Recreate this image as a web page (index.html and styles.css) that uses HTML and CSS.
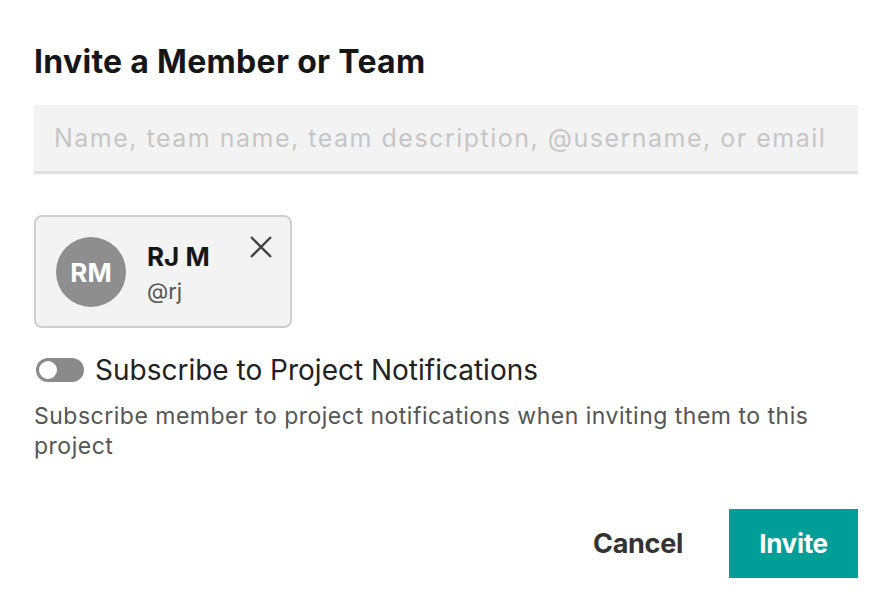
FILE: index.html
```html
<!DOCTYPE html>
<html>
<head>
<meta charset="utf-8">
<link rel="stylesheet" href="styles.css">
</head>
<body>
<div class="dialog">
  <h1 class="title">Invite a Member or Team</h1>
  <div class="search">
    <input class="search-input" type="text" placeholder="Name, team name, team description, @username, or email">
  </div>
  <div class="chips">
    <div class="chip">
      <div class="avatar">RM</div>
      <div class="chip-info">
        <div class="chip-name">RJ M</div>
        <div class="chip-handle">@rj</div>
      </div>
      <button class="chip-close" aria-label="Remove">
        <svg width="24" height="24" viewBox="0 0 24 24"><path d="M2 2 L22 22 M22 2 L2 22" stroke="#444" stroke-width="2.4" fill="none"/></svg>
      </button>
    </div>
  </div>
  <div class="toggle-row">
    <span class="toggle"><span class="knob"></span></span>
    <span class="toggle-label">Subscribe to Project Notifications</span>
  </div>
  <p class="desc">Subscribe member to project notifications when inviting them to this project</p>
  <div class="actions">
    <button class="btn-cancel">Cancel</button>
    <button class="btn-invite">Invite</button>
  </div>
</div>
</body>
</html>
```
FILE: styles.css
```css
html, body { margin: 0; padding: 0; background: #fff; }
body { font-family: Inter, "Liberation Sans", Arial, sans-serif; color: #1a1a1a; }
.dialog { padding: 40px 30px 0 34px; width: 824px; }
.title { margin: 0; font-size: 32px; font-weight: 700; line-height: 44px; letter-spacing: 0.3px; color: #161616; }
.search { margin-top: 21px; background: #f3f3f3; border-bottom: 3px solid #e0e0e0; height: 66px; display: flex; align-items: center; }
.search-input { border: 0; background: transparent; outline: none; width: 100%; padding: 0 20px; font-family: inherit; font-size: 25px; letter-spacing: 1.5px; color: #222; }
.search-input::placeholder { color: #c6c6c6; }
.chips { margin-top: 41px; display: flex; }
.chip { box-sizing: border-box; width: 258px; height: 113px; border: 2px solid #cfcfcf; border-radius: 8px; background: #f3f3f3; display: flex; padding: 20px 17px 0 20px; }
.avatar { width: 70px; height: 70px; border-radius: 50%; background: #8e8e8e; color: #fff; font-weight: 700; font-size: 26px; display: flex; align-items: center; justify-content: center; }
.chip-info { margin-left: 21px; display: flex; flex-direction: column; }
.chip-name { font-weight: 700; font-size: 26px; line-height: 30px; margin-top: 5px; color: #161616; }
.chip-handle { font-size: 22px; line-height: 26px; margin-top: 6px; color: #555; }
.chip-close { border: 0; background: transparent; padding: 0; margin-left: auto; margin-top: -2px; width: 24px; height: 24px; cursor: pointer; display: block; }
.chip-close svg { display: block; }
.toggle-row { margin-top: 27px; display: flex; align-items: center; }
.toggle { width: 48px; height: 24px; border-radius: 12px; background: #8a8a8a; display: flex; align-items: center; padding: 0 3px; box-sizing: border-box; margin-left: 2px; }
.knob { width: 18px; height: 18px; border-radius: 50%; background: #fff; }
.toggle-label { margin-left: 11px; font-size: 28px; line-height: 30px; color: #222; }
.desc { margin: 16px 0 0; font-size: 23px; line-height: 30px; letter-spacing: 0.5px; color: #555; }
.actions { margin-top: 48px; display: flex; justify-content: flex-end; align-items: center; }
.btn-cancel { border: 0; background: transparent; font-family: inherit; font-weight: 700; font-size: 27px; color: #333; padding: 0; margin-right: 46px; cursor: pointer; letter-spacing: -0.3px; }
.btn-invite { border: 0; background: #009e96; color: #fff; font-family: inherit; font-weight: 700; font-size: 26px; width: 129px; height: 69px; cursor: pointer; letter-spacing: -0.3px; }
```
